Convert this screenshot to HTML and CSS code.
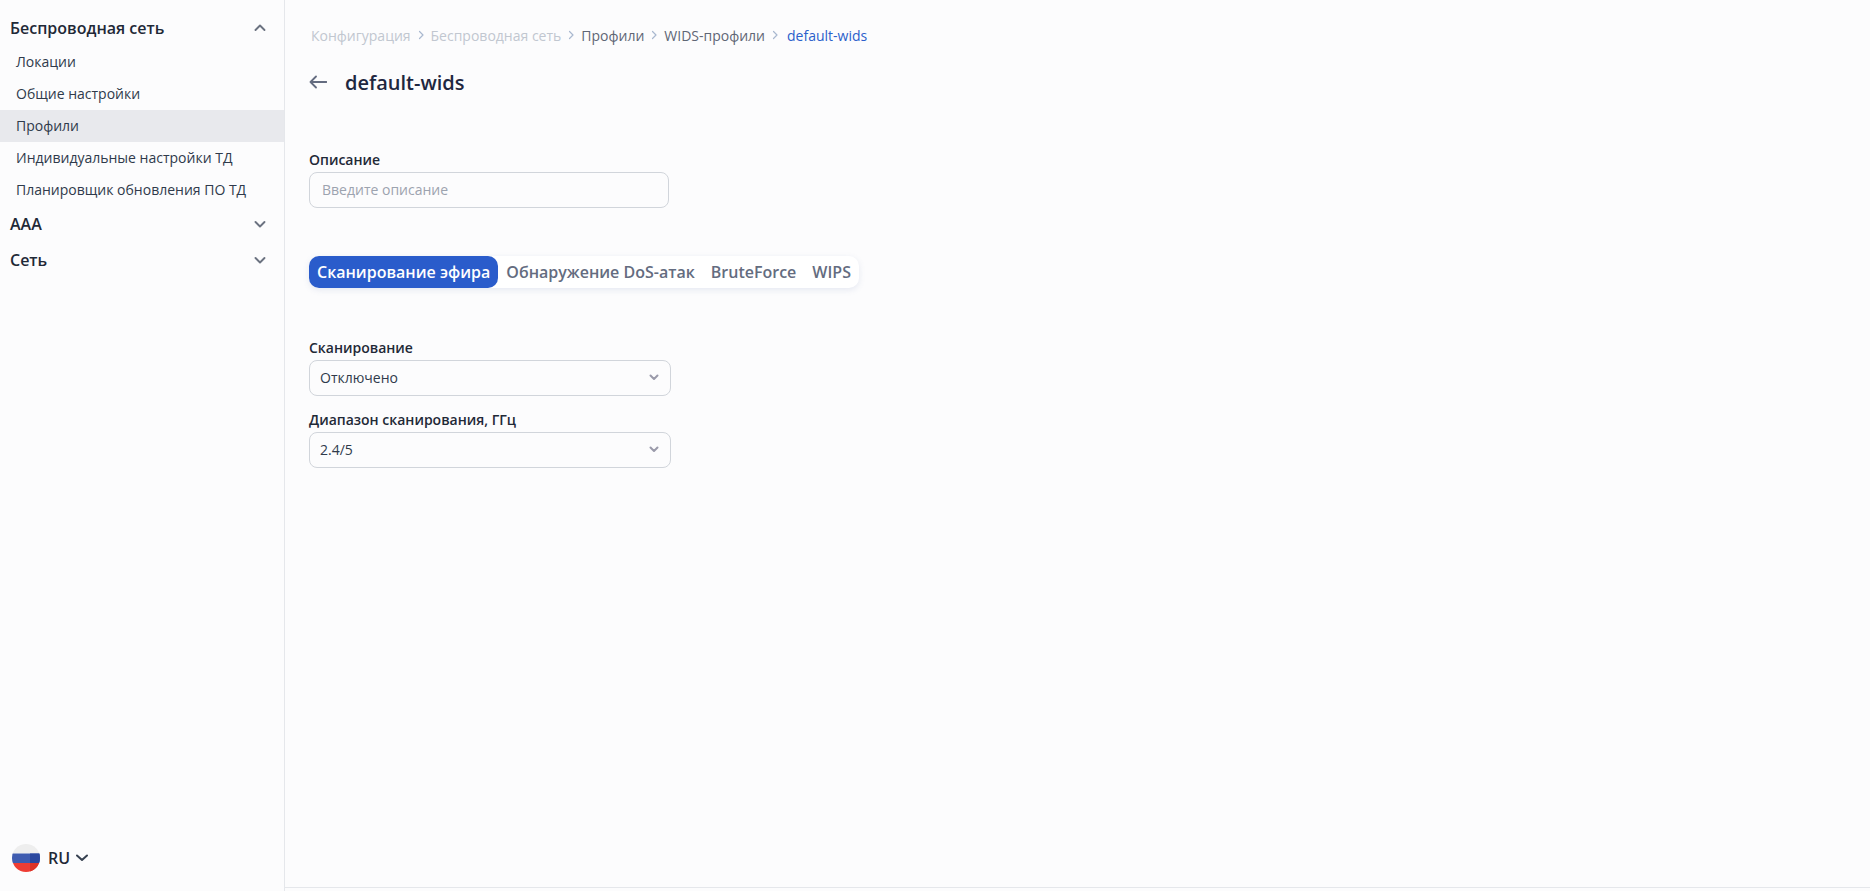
FILE: index.html
```html
<!DOCTYPE html>
<html lang="ru">
<head>
<meta charset="utf-8">
<title>default-wids</title>
<link rel="stylesheet" href="styles.css">
</head>
<body>
<div class="app">
  <aside class="sidebar">
    <nav class="nav">
      <div class="group-head"><span>Беспроводная сеть</span>
        <svg class="chev" viewBox="0 0 16 16"><path d="M3.5 10 8 5.5l4.5 4.5"/></svg></div>
      <a class="item">Локации</a>
      <a class="item">Общие настройки</a>
      <a class="item active">Профили</a>
      <a class="item">Индивидуальные настройки ТД</a>
      <a class="item">Планировщик обновления ПО ТД</a>
      <div class="group-head"><span>ААА</span>
        <svg class="chev" viewBox="0 0 16 16"><path d="M3.5 6 8 10.5 12.5 6"/></svg></div>
      <div class="group-head"><span>Сеть</span>
        <svg class="chev" viewBox="0 0 16 16"><path d="M3.5 6 8 10.5 12.5 6"/></svg></div>
    </nav>
    <div class="lang">
      <svg class="flag" viewBox="0 0 28 28">
        <defs><clipPath id="c"><circle cx="14" cy="14" r="14"/></clipPath></defs>
        <g clip-path="url(#c)">
          <rect width="28" height="9.5" fill="#eeeeee"/>
          <rect y="9.5" width="28" height="9.5" fill="#3f5cb0"/>
          <rect x="18" y="9.5" width="10" height="9.5" fill="#2a479f"/>
          <rect y="19" width="28" height="9" fill="#ee3d34"/>
          <rect x="18" y="19" width="10" height="9" fill="#dc3328"/>
        </g>
      </svg>
      <span class="lang-code">RU</span>
      <svg class="lang-chev" viewBox="0 0 12 8"><path d="M1 1.5 6 6l5-4.5"/></svg>
    </div>
  </aside>
  <div class="content">
    <main class="main">
      <div class="crumbs">
        <span class="c-muted">Конфигурация</span><svg class="sep" viewBox="0 0 8 10"><path d="M2.5 1.5 6 5 2.5 8.5"/></svg>
        <span class="c-muted">Беспроводная сеть</span><svg class="sep" viewBox="0 0 8 10"><path d="M2.5 1.5 6 5 2.5 8.5"/></svg>
        <span class="c-mid">Профили</span><svg class="sep" viewBox="0 0 8 10"><path d="M2.5 1.5 6 5 2.5 8.5"/></svg>
        <span class="c-mid">WIDS-профили</span><svg class="sep" viewBox="0 0 8 10"><path d="M2.5 1.5 6 5 2.5 8.5"/></svg>
        <span class="c-cur">default-wids</span>
      </div>
      <div class="title-row">
        <svg class="back" viewBox="0 0 18 14"><path d="M17.5 7H1.5M7 1.5 1.5 7 7 12.5"/></svg>
        <h1>default-wids</h1>
      </div>
      <div class="desc">
        <label class="label">Описание</label>
        <div class="input">Введите описание</div>
      </div>
      <div class="tabs">
        <span class="tab on">Сканирование эфира</span>
        <span class="tab">Обнаружение DoS-атак</span>
        <span class="tab">BruteForce</span>
        <span class="tab">WIPS</span>
      </div>
      <div class="form">
        <div class="field">
          <label class="label">Сканирование</label>
          <div class="select"><span>Отключено</span><svg class="sel-chev" viewBox="0 0 12 8"><path d="M2.5 2.5 6 6l3.5-3.5"/></svg></div>
        </div>
        <div class="field">
          <label class="label">Диапазон сканирования, ГГц</label>
          <div class="select"><span>2.4/5</span><svg class="sel-chev" viewBox="0 0 12 8"><path d="M2.5 2.5 6 6l3.5-3.5"/></svg></div>
        </div>
      </div>
    </main>
    <footer class="foot"></footer>
  </div>
</div>
</body>
</html>
```

FILE: styles.css
```css
* { box-sizing: border-box; }
html, body { margin: 0; height: 100%; }
body {
  background: #fcfcfd;
  color: #1f2937;
  font-family: "Open Sans", "Noto Sans", sans-serif;
  overflow: hidden;
}
.app { display: flex; height: 891px; }
.sidebar {
  width: 285px;
  flex: none;
  border-right: 1px solid #e5e7eb;
  display: flex;
  flex-direction: column;
  justify-content: space-between;
  padding-top: 10px;
}
.group-head {
  height: 36px;
  display: flex;
  align-items: center;
  justify-content: space-between;
  padding: 0 16px 0 10px;
  font-size: 16px;
  font-weight: 600;
  color: #1f2937;
}
.chev { width: 16px; height: 16px; fill: none; stroke: #6b7280; stroke-width: 1.9; stroke-linecap: round; stroke-linejoin: round; }
.item {
  display: flex;
  align-items: center;
  height: 32px;
  padding: 0 0 2px 16px;
  font-size: 14px;
  color: #2f3a4b;
}
.item.active { background: #e8e9ed; }
.lang {
  display: flex;
  align-items: center;
  height: 28px;
  margin: 0 0 19px 12px;
}
.flag { width: 28px; height: 28px; flex: none; }
.lang-code { margin-left: 8px; font-size: 16px; font-weight: 600; color: #1f2937; }
.lang-chev { width: 12px; height: 8px; margin-left: 6px; fill: none; stroke: #374151; stroke-width: 2; stroke-linecap: round; stroke-linejoin: round; }
.content { flex: 1; display: flex; flex-direction: column; min-width: 0; }
.main { flex: 1; padding: 0 24px; }
.foot { height: 4px; border-top: 1px solid #e5e7eb; }
.crumbs {
  display: flex;
  align-items: center;
  height: 24px;
  margin: 23px 0 0 2px;
  font-size: 14px;
  gap: 6px;
}
.sep { width: 8px; height: 10px; fill: none; stroke: #a9b8cf; stroke-width: 1.2; stroke-linecap: round; stroke-linejoin: round; }
.c-muted { color: #c1c7d0; }
.c-mid { color: #5f6675; }
.c-cur { color: #2b5fcb; margin-left: 2px; }
.title-row { display: flex; align-items: center; height: 32px; margin-top: 20px; }
.back { width: 18px; height: 14px; margin-bottom: 2px; fill: none; stroke: #646c80; stroke-width: 1.8; stroke-linecap: round; stroke-linejoin: round; }
h1 { margin: 0 0 0 18px; font-size: 20px; line-height: 32px; font-weight: 600; color: #1e2740; }
.desc { margin-top: 49px; }
.label {
  display: block;
  height: 24px;
  line-height: 24px;
  font-size: 14px;
  font-weight: 600;
  color: #1f2937;
}
.input {
  width: 360px;
  height: 36px;
  border: 1px solid #d1d5db;
  border-radius: 8px;
  padding: 0 12px;
  font-size: 14px;
  line-height: 34px;
  color: #9ca3af;
}
.tabs {
  display: inline-flex;
  align-items: center;
  height: 32px;
  margin-top: 48px;
  border-radius: 10px;
  background: #fff;
  box-shadow: 0 2px 6px rgba(90, 110, 170, 0.14);
}
.tab {
  height: 32px;
  padding: 0 8px;
  font-size: 16px;
  font-weight: 600;
  line-height: 32px;
  color: #646c80;
  border-radius: 10px;
  white-space: nowrap;
}
.tab.on { background: #2a5ccb; color: #fff; }
.form { margin-top: 48px; display: flex; flex-direction: column; gap: 12px; }
.select {
  width: 362px;
  height: 36px;
  border: 1px solid #d1d5db;
  border-radius: 8px;
  padding: 0 10px 2px 10px;
  display: flex;
  align-items: center;
  justify-content: space-between;
  font-size: 14px;
  color: #2f3a4b;
}
.sel-chev { width: 12px; height: 8px; fill: none; stroke: #9a9aaa; stroke-width: 2; stroke-linecap: round; stroke-linejoin: round; }
```
